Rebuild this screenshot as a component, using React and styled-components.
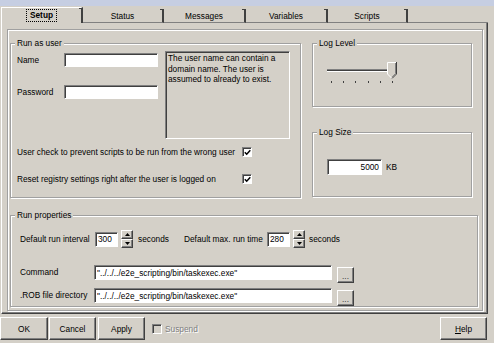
import React from 'react'
import styled, { createGlobalStyle } from 'styled-components'

const GlobalStyle = createGlobalStyle`
  html, body {
    margin: 0;
    padding: 0;
    background: #d4d0c8;
  }
  body {
    font-family: "Liberation Sans", Arial, sans-serif;
    font-size: 8.3px;
    color: #000;
  }
`

const raised = `
  box-sizing: border-box;
  background: #d4d0c8;
  border: 1px solid;
  border-color: #fff #404040 #404040 #fff;
  box-shadow: inset -1px -1px 0 #808080;
`

const sunken = `
  box-sizing: border-box;
  border: 1px solid;
  border-color: #808080 #fff #fff #808080;
  box-shadow: inset 1px 1px 0 #404040;
`

const Dialog = styled.div`
  width: 494px;
  height: 343px;
  background: #d4d0c8;
  overflow: hidden;
`

const TopStrip = styled.div`
  height: 6px;
  background: #c6cee2;
`

const TabRow = styled.div`
  display: flex;
  align-items: flex-end;
  width: 488px;
  height: 17px;
  padding-left: 1px;
  box-sizing: border-box;
`

const Tab = styled.div`
  position: relative;
  box-sizing: border-box;
  flex: none;
  width: ${p => p.$w}px;
  height: ${p => (p.$active ? 16 : 14)}px;
  display: flex;
  align-items: center;
  justify-content: center;
  border-right: 2px solid #404040;
  border-left: ${p => (p.$active ? '1px solid #fff' : 'none')};
  border-top: ${p => (p.$active ? '1px solid #fff' : 'none')};
  border-bottom: ${p => (p.$active ? 'none' : '1px solid #808080')};
  font-weight: ${p => (p.$active ? 700 : 400)};

  &::before {
    content: '';
    position: absolute;
    top: 0;
    right: -2px;
    width: 4px;
    height: 1px;
    background: #404040;
  }
`

const TabFiller = styled.div`
  flex: 1;
  height: 14px;
  box-sizing: border-box;
  border-bottom: 1px solid #808080;
`

const FocusLabel = styled.span`
  border: 1px dotted #000;
  padding: 1px 3px;
  line-height: 9px;
`

const Panel = styled.div`
  box-sizing: border-box;
  margin-left: 1px;
  width: 487px;
  height: 291px;
  border-left: 1px solid #fff;
  border-right: 1px solid #404040;
  border-bottom: 1px solid #404040;
  box-shadow: inset -1px -1px 0 #808080;
  padding: 6px 4px 2px 5px;
`

const PageFrame = styled.div`
  box-sizing: border-box;
  width: 476px;
  height: 282px;
  border: 1px solid #a0a0a0;
  box-shadow: inset 1px 1px 0 #fff, 1px 1px 0 #fff;
  padding: 13px 0 0 2px;
`

const TopSection = styled.div`
  display: flex;
  align-items: flex-start;
`

const SideColumn = styled.div`
  display: flex;
  flex-direction: column;
  margin-left: 11px;
`

const GroupBox = styled.div`
  position: relative;
  box-sizing: border-box;
  flex: none;
  width: ${p => p.$w}px;
  height: ${p => p.$h}px;
  margin-top: ${p => p.$mt || 0}px;
  border: 1px solid #a0a0a0;
  box-shadow: inset 1px 1px 0 #fff, 1px 1px 0 #fff;
`

const Legend = styled.span`
  position: absolute;
  top: -6px;
  left: 4px;
  padding: 0 2px;
  line-height: 11px;
  background: #d4d0c8;
  white-space: nowrap;
`

const UserBody = styled.div`
  padding: 7px 0 0 6px;
`

const UserTop = styled.div`
  display: flex;
  align-items: flex-start;
`

const Fields = styled.div`
  width: 148px;
  flex: none;
  padding-top: 2px;
  display: flex;
  flex-direction: column;
  gap: 18px;
`

const Row = styled.div`
  display: flex;
  align-items: ${p => p.$align || 'center'};
  height: ${p => (p.$h ? `${p.$h}px` : 'auto')};
  margin-top: ${p => p.$mt || 0}px;
`

const Label = styled.span`
  flex: none;
  width: ${p => (p.$w ? `${p.$w}px` : 'auto')};
  margin-left: ${p => p.$ml || 0}px;
  line-height: ${p => p.$lh || 10}px;
  white-space: nowrap;
  color: ${p => (p.$disabled ? '#808080' : '#000')};
  text-shadow: ${p => (p.$disabled ? '1px 1px 0 #fff' : 'none')};
`

const TextInput = styled.input`
  ${sunken}
  flex: none;
  width: ${p => p.$w}px;
  height: ${p => p.$h || 15}px;
  margin: 0;
  padding: 0 2px;
  background: #fff;
  font-family: "Liberation Sans", Arial, sans-serif;
  font-size: 8.3px;
  color: #000;
  text-align: ${p => p.$align || 'left'};
  outline: none;
`

const InfoBox = styled.div`
  box-sizing: border-box;
  width: 125px;
  height: 88px;
  border: 1px solid;
  border-color: #808080 #fff #fff #808080;
  box-shadow: inset 1px 1px 0 #404040;
  padding: 1px 3px 0 2px;
  line-height: 10.5px;
`

const CheckBox = styled.span`
  ${sunken}
  flex: none;
  width: 10px;
  height: 10px;
  margin-left: ${p => p.$ml || 0}px;
  background: ${p => (p.$disabled ? '#d4d0c8' : '#fff')};
  display: flex;
  align-items: center;
  justify-content: center;
`

const Slider = styled.div`
  position: relative;
  box-sizing: border-box;
  width: 72px;
  height: 41px;
  margin-left: 14px;
  padding-top: 25px;
`

const Track = styled.div`
  box-sizing: border-box;
  width: 70px;
  height: 3px;
  background: #404040;
  border-top: 1px solid #808080;
  border-bottom: 1px solid #fff;
`

const Ticks = styled.div`
  display: flex;
  justify-content: space-between;
  margin-top: 9px;
  padding: 0 6px 0 4px;
`

const Tick = styled.span`
  width: 1px;
  height: 2px;
  background: #404040;
`

const Thumb = styled.svg`
  position: absolute;
  top: 18px;
  right: 2px;
`

const SizeBody = styled.div`
  display: flex;
  align-items: center;
  padding: 26px 0 0 14px;
`

const PropsBody = styled.div`
  padding: 14px 0 0 9px;
`

const Spin = styled.div`
  display: flex;
  flex-direction: column;
  flex: none;
  width: 12px;
  height: 18px;
  margin-left: 3px;
`

const SpinButton = styled.div`
  ${raised}
  flex: 1;
  display: flex;
  align-items: center;
  justify-content: center;
`

const BrowseButton = styled.div`
  ${raised}
  flex: none;
  width: 17px;
  height: 16px;
  margin: 2px 0 0 5px;
  display: flex;
  align-items: flex-end;
  justify-content: center;
  padding-bottom: 3px;
  line-height: 6px;
  color: #404040;
`

const ButtonBar = styled.div`
  display: flex;
  align-items: center;
  height: 23px;
  margin-top: 3px;
  padding-right: 7px;
`

const PushButton = styled.div`
  ${raised}
  flex: none;
  width: ${p => p.$w}px;
  height: 23px;
  margin-left: ${p => (p.$ml === 'auto' ? 'auto' : `${p.$ml || 0}px`)};
  display: flex;
  align-items: center;
  justify-content: center;
`

const Check = () => (
  <svg width="7" height="7" viewBox="0 0 7 7">
    <path d="M0.8 3.2 L2.7 5.2 L6.3 1.2" fill="none" stroke="#000" strokeWidth="1.5" />
  </svg>
)

const Arrow = ({ down }) => (
  <svg width="5" height="3" viewBox="0 0 5 3">
    <polygon points={down ? '0,0 5,0 2.5,3' : '0,3 5,3 2.5,0'} fill="#000" />
  </svg>
)

const Spinner = () => (
  <Spin>
    <SpinButton><Arrow /></SpinButton>
    <SpinButton><Arrow down /></SpinButton>
  </Spin>
)

const tabs = [
  { label: 'Setup', w: 82, active: true },
  { label: 'Status', w: 81 },
  { label: 'Messages', w: 82 },
  { label: 'Variables', w: 82 },
  { label: 'Scripts', w: 80 },
]

const path = '"../../../e2e_scripting/bin/taskexec.exe"'

export default function App() {
  return (
    <Dialog>
      <GlobalStyle />
      <TopStrip />
      <TabRow>
        {tabs.map(t => (
          <Tab key={t.label} $w={t.w} $active={t.active}>
            {t.active ? <FocusLabel>{t.label}</FocusLabel> : t.label}
          </Tab>
        ))}
        <TabFiller />
      </TabRow>

      <Panel>
        <PageFrame>
          <TopSection>
            <GroupBox $w={291} $h={155}>
              <Legend>Run as user</Legend>
              <UserBody>
                <UserTop>
                  <Fields>
                    <Row>
                      <Label $w={47}>Name</Label>
                      <TextInput $w={94} $h={14} readOnly value="" />
                    </Row>
                    <Row>
                      <Label $w={47}>Password</Label>
                      <TextInput $w={94} $h={14} readOnly value="" />
                    </Row>
                  </Fields>
                  <InfoBox>
                    The user name can contain a domain name. The user is assumed to already to exist.
                  </InfoBox>
                </UserTop>
                <Row $h={10} $mt={8}>
                  <Label $w={225}>User check to prevent scripts to be run from the wrong user</Label>
                  <CheckBox><Check /></CheckBox>
                </Row>
                <Row $h={10} $mt={17}>
                  <Label $w={225}>Reset registry settings right after the user is logged on</Label>
                  <CheckBox><Check /></CheckBox>
                </Row>
              </UserBody>
            </GroupBox>

            <SideColumn>
              <GroupBox $w={160} $h={64}>
                <Legend>Log Level</Legend>
                <Slider>
                  <Track />
                  <Ticks>
                    {[0, 1, 2, 3, 4, 5].map(i => <Tick key={i} />)}
                  </Ticks>
                  <Thumb width="10" height="17" viewBox="0 0 10 17">
                    <polygon points="0.5,0.5 9.5,0.5 9.5,12 5,16.5 0.5,12" fill="#d4d0c8" />
                    <polyline points="0.5,12 0.5,0.5 9,0.5" fill="none" stroke="#fff" />
                    <polyline points="0.5,12 5,16.5" fill="none" stroke="#fff" />
                    <polyline points="9.5,0 9.5,12 5,16.5" fill="none" stroke="#404040" />
                    <polyline points="8.5,1 8.5,11.6 5,15.2" fill="none" stroke="#808080" />
                  </Thumb>
                </Slider>
              </GroupBox>

              <GroupBox $w={160} $h={65} $mt={25}>
                <Legend>Log Size</Legend>
                <SizeBody>
                  <TextInput $w={55} $h={16} $align="right" readOnly value="5000" />
                  <Label $ml={4}>KB</Label>
                </SizeBody>
              </GroupBox>
            </SideColumn>
          </TopSection>

          <GroupBox $w={468} $h={92} $mt={17}>
            <Legend>Run properties</Legend>
            <PropsBody>
              <Row $h={18}>
                <Label $w={75}>Default run interval</Label>
                <TextInput $w={23} readOnly value="300" />
                <Spinner />
                <Label $ml={5} $w={31}>seconds</Label>
                <Label $ml={15} $w={83}>Default max. run time</Label>
                <TextInput $w={23} readOnly value="280" />
                <Spinner />
                <Label $ml={4}>seconds</Label>
              </Row>
              <Row $align="flex-start" $mt={17}>
                <Label $w={74} $lh={15}>Command</Label>
                <TextInput $w={238} readOnly value={path} />
                <BrowseButton>...</BrowseButton>
              </Row>
              <Row $align="flex-start" $mt={5}>
                <Label $w={74} $lh={15}>.ROB file directory</Label>
                <TextInput $w={238} readOnly value={path} />
                <BrowseButton>...</BrowseButton>
              </Row>
            </PropsBody>
          </GroupBox>
        </PageFrame>
      </Panel>

      <ButtonBar>
        <PushButton $w={48}>OK</PushButton>
        <PushButton $w={47} $ml={1}>Cancel</PushButton>
        <PushButton $w={47} $ml={2}>Apply</PushButton>
        <CheckBox $disabled $ml={7} />
        <Label $ml={3} $disabled>Suspend</Label>
        <PushButton $w={47} $ml="auto"><u>H</u>elp</PushButton>
      </ButtonBar>
    </Dialog>
  )
}
